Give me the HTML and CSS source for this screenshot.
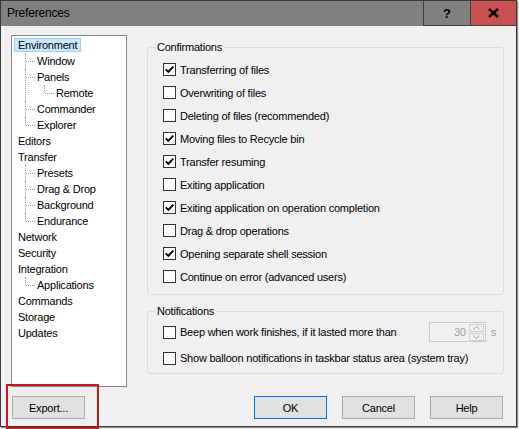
FILE: index.html
```html
<!DOCTYPE html>
<html>
<head>
<meta charset="utf-8">
<link rel="stylesheet" href="styles.css">
</head>
<body>
<div class="window">
  <div class="titlebar">
    <div class="title">Preferences</div>
    <div class="tb-btn tb-help">?</div>
    <div class="tb-btn tb-close">
      <svg width="11" height="10" viewBox="0 0 11 10"><path d="M1 1 L10 9 M10 1 L1 9" stroke="#000" stroke-width="2.4" fill="none"/></svg>
    </div>
  </div>
  <div class="content">
    <div class="top">
      <div class="tree">
        <ul class="tree-root">
          <li><span class="node selected">Environment</span>
            <ul class="sub">
              <li><span class="node">Window</span></li>
              <li><span class="node">Panels</span>
                <ul class="sub">
                  <li><span class="node">Remote</span></li>
                </ul>
              </li>
              <li><span class="node">Commander</span></li>
              <li><span class="node">Explorer</span></li>
            </ul>
          </li>
          <li><span class="node">Editors</span></li>
          <li><span class="node">Transfer</span>
            <ul class="sub">
              <li><span class="node">Presets</span></li>
              <li><span class="node">Drag &amp; Drop</span></li>
              <li><span class="node">Background</span></li>
              <li><span class="node">Endurance</span></li>
            </ul>
          </li>
          <li><span class="node">Network</span></li>
          <li><span class="node">Security</span></li>
          <li><span class="node">Integration</span>
            <ul class="sub">
              <li><span class="node">Applications</span></li>
            </ul>
          </li>
          <li><span class="node">Commands</span></li>
          <li><span class="node">Storage</span></li>
          <li><span class="node">Updates</span></li>
        </ul>
      </div>
      <div class="panel">
        <div class="group group-confirm">
          <div class="group-title">Confirmations</div>
          <div class="rows">
            <div class="row"><span class="cb checked"><svg width="11" height="11" viewBox="0 0 11 11"><path d="M1.8 5.4 L4.3 7.9 L9.3 2.6" stroke="#000" stroke-width="1.9" fill="none"/></svg></span><span>Transferring of files</span></div>
            <div class="row"><span class="cb"></span><span>Overwriting of files</span></div>
            <div class="row"><span class="cb"></span><span>Deleting of files (recommended)</span></div>
            <div class="row"><span class="cb checked"><svg width="11" height="11" viewBox="0 0 11 11"><path d="M1.8 5.4 L4.3 7.9 L9.3 2.6" stroke="#000" stroke-width="1.9" fill="none"/></svg></span><span>Moving files to Recycle bin</span></div>
            <div class="row"><span class="cb checked"><svg width="11" height="11" viewBox="0 0 11 11"><path d="M1.8 5.4 L4.3 7.9 L9.3 2.6" stroke="#000" stroke-width="1.9" fill="none"/></svg></span><span>Transfer resuming</span></div>
            <div class="row"><span class="cb"></span><span>Exiting application</span></div>
            <div class="row"><span class="cb checked"><svg width="11" height="11" viewBox="0 0 11 11"><path d="M1.8 5.4 L4.3 7.9 L9.3 2.6" stroke="#000" stroke-width="1.9" fill="none"/></svg></span><span>Exiting application on operation completion</span></div>
            <div class="row"><span class="cb"></span><span>Drag &amp; drop operations</span></div>
            <div class="row"><span class="cb checked"><svg width="11" height="11" viewBox="0 0 11 11"><path d="M1.8 5.4 L4.3 7.9 L9.3 2.6" stroke="#000" stroke-width="1.9" fill="none"/></svg></span><span>Opening separate shell session</span></div>
            <div class="row"><span class="cb"></span><span>Continue on error (advanced users)</span></div>
          </div>
        </div>
        <div class="group group-notify">
          <div class="group-title">Notifications</div>
          <div class="rows rows-notify">
            <div class="row nrow"><span class="cb"></span><span>Beep when work finishes, if it lasted more than</span>
              <div class="spin">
                <span class="spin-val">30</span>
                <span class="spin-btns">
                  <span class="spin-btn"><svg width="7" height="4" viewBox="0 0 7 4"><path d="M0.5 3.5 L3.5 0.5 L6.5 3.5" stroke="#a8a8a8" stroke-width="1" fill="none"/></svg></span>
                  <span class="spin-btn"><svg width="7" height="4" viewBox="0 0 7 4"><path d="M0.5 0.5 L3.5 3.5 L6.5 0.5" stroke="#a8a8a8" stroke-width="1" fill="none"/></svg></span>
                </span>
              </div>
              <span class="unit">s</span>
            </div>
            <div class="row nrow"><span class="cb"></span><span>Show balloon notifications in taskbar status area (system tray)</span></div>
          </div>
        </div>
      </div>
    </div>
    <div class="footer">
      <button class="btn btn-export">Export...</button>
      <div class="footer-right">
        <button class="btn btn-default">OK</button>
        <button class="btn">Cancel</button>
        <button class="btn">Help</button>
      </div>
    </div>
  </div>
</div>
<div class="annotation"></div>
</body>
</html>
```

FILE: styles.css
```css
html, body {
  margin: 0;
  padding: 0;
}
body {
  position: relative;
  width: 519px;
  height: 429px;
  background: #ececec;
  font-family: "Liberation Sans", Arial, sans-serif;
  font-size: 11px;
  letter-spacing: -0.22px;
  color: #000;
  overflow: hidden;
}
.window {
  width: 517px;
  height: 427px;
  box-sizing: border-box;
  border: 1px solid #3a3a3a;
  box-shadow: 1px 1px 0 #8c8c8c;
  background: #f0f0f0;
  display: flex;
  flex-direction: column;
}
.titlebar {
  height: 25px;
  background: #808080;
  display: flex;
  align-items: stretch;
  flex: none;
}
.title {
  flex: 1;
  font-size: 12px;
  letter-spacing: -0.2px;
  line-height: 25px;
  padding-left: 6px;
  color: #000;
}
.tb-btn {
  box-sizing: border-box;
  height: 25px;
  border-left: 1px solid #404040;
  border-bottom: 1px solid #404040;
  display: flex;
  align-items: center;
  justify-content: center;
}
.tb-help {
  width: 47px;
  font-weight: bold;
  font-size: 13px;
  letter-spacing: 0;
  background: #808080;
}
.tb-close {
  width: 46px;
  background: #c75050;
}
.content {
  flex: 1;
  display: flex;
  flex-direction: column;
  padding: 9px 12px 0 10px;
}
.top {
  display: flex;
  gap: 20px;
}
.tree {
  width: 116px;
  height: 352px;
  box-sizing: border-box;
  border: 1px solid #828790;
  background: #fff;
  padding-top: 1px;
}
.tree ul {
  list-style: none;
  margin: 0;
  padding: 0;
}
.tree li {
  position: relative;
}
.tree .sub {
  padding-left: 19px;
}
.node {
  display: inline-block;
  height: 14px;
  line-height: 13px;
  margin: 1px 0 1px 2px;
  padding: 0 3px;
  border: 1px solid transparent;
  box-sizing: border-box;
  white-space: nowrap;
  vertical-align: top;
}
.node.selected {
  background: #cce8ff;
  border-color: #99d1ff;
}
.sub > li::before {
  content: "";
  position: absolute;
  left: -6px;
  top: 0;
  height: 100%;
  border-left: 1px dotted #a0a0a0;
}
.sub > li:last-child::before {
  height: 8px;
}
.sub > li::after {
  content: "";
  position: absolute;
  left: -5px;
  top: 8px;
  width: 9px;
  border-top: 1px dotted #a0a0a0;
}
.panel {
  width: 357px;
  padding-top: 12px;
}
.group {
  border: 1px solid #dcdcdc;
  border-radius: 3px;
  padding-left: 15px;
}
.group-title {
  margin: -7px 0 0 -8px;
  padding: 0 2px;
  width: fit-content;
  line-height: 13px;
  background: #f0f0f0;
}
.rows {
  padding: 4px 0 6px;
}
.row {
  display: flex;
  align-items: center;
  height: 23px;
  white-space: nowrap;
}
.cb {
  width: 13px;
  height: 13px;
  box-sizing: border-box;
  border: 1px solid #333;
  background: #fff;
  margin-right: 4px;
  flex: none;
  display: flex;
}
.group-notify {
  margin-top: 16px;
  padding-right: 7px;
}
.rows-notify {
  padding: 2px 0 3px;
  display: flex;
  flex-direction: column;
  gap: 2px;
}
.nrow {
  height: 24px;
}
.spin {
  margin-left: auto;
  width: 57px;
  height: 20px;
  box-sizing: border-box;
  border: 1px solid #cccccc;
  display: flex;
  align-items: center;
  padding: 0 1px 0 0;
}
.spin-val {
  flex: 1;
  text-align: right;
  color: #a0a0a0;
  padding-right: 3px;
}
.spin-btns {
  display: flex;
  flex-direction: column;
  gap: 1px;
  width: 15px;
}
.spin-btn {
  height: 8px;
  box-sizing: border-box;
  border: 1px solid #d0d0d0;
  display: flex;
  align-items: center;
  justify-content: center;
}
.unit {
  margin-left: 5px;
  color: #a0a0a0;
}
.footer {
  display: flex;
  margin-top: 9px;
}
.footer-right {
  margin-left: auto;
  display: flex;
  gap: 15px;
  margin-right: 1px;
}
.btn {
  width: 73px;
  height: 23px;
  box-sizing: border-box;
  border: 1px solid #adadad;
  background: #e1e1e1;
  font-family: "Liberation Sans", Arial, sans-serif;
  font-size: 11px;
  letter-spacing: -0.22px;
  color: #000;
  padding: 0;
  margin: 0;
}
.btn-export {
  margin-left: 1px;
}
.btn-default {
  border-color: #0078d7;
}
.annotation {
  position: absolute;
  left: 6px;
  top: 384px;
  width: 93px;
  height: 45px;
  box-sizing: border-box;
  border: 2px solid #c8161d;
}
```
